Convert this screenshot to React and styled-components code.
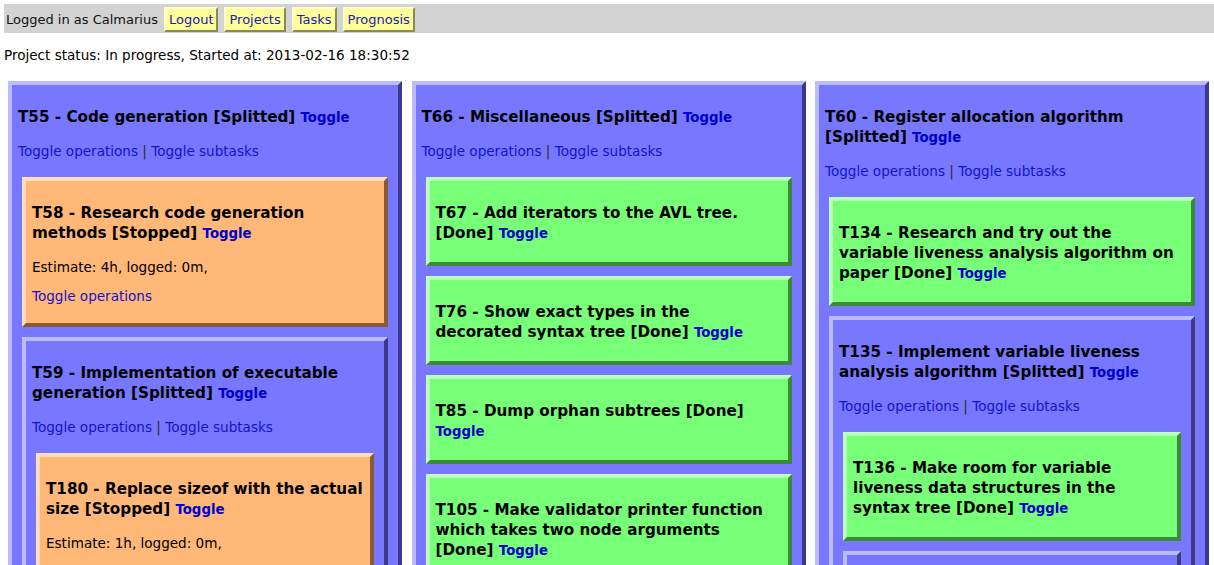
import React from "react";
import styled, { createGlobalStyle, css } from "styled-components";

const GlobalStyle = createGlobalStyle`
  html, body { margin: 0; padding: 0; background: #ffffff; }
  body {
    font-family: "DejaVu Sans", Verdana, sans-serif;
    font-size: 13.55px;
    color: #000;
    overflow: hidden;
  }
`;

const Page = styled.div`
  padding: 4px 0 0 4px;
`;

const TopBar = styled.div`
  background: #d3d3d3;
  height: 29px;
  display: flex;
  align-items: flex-end;
  padding: 0 0 1px 2px;
  box-sizing: border-box;
  gap: 6px;
  color: #111;
  font-size: 13px;
`;

const BarLabel = styled.span`
  line-height: 24px;
`;

const NavButton = styled.a`
  display: inline-block;
  background: #ffff99;
  color: #2020b0;
  font-size: 13px;
  line-height: 17px;
  padding: 2px 3px 2px 3px;
  border-style: solid;
  border-width: 2px;
  border-color: #ffffcc #8a8a55 #8a8a55 #ffffcc;
  text-decoration: none;
  cursor: pointer;
`;

const Status = styled.p`
  margin: 14px 0 0 0;
  line-height: 16px;
`;

const Board = styled.div`
  display: grid;
  grid-template-columns: repeat(3, 394px);
  column-gap: 9.5px;
  margin: 18px 0 0 4px;
  align-items: start;
`;

const palettes = {
  split: { bg: "#7777ff", light: "#bbbbff", dark: "#3a3a8a" },
  stopped: { bg: "#ffb877", light: "#ffdcbb", dark: "#8a5a33" },
  done: { bg: "#77ff77", light: "#bbffbb", dark: "#3a8a3a" },
};

const Box = styled.div`
  background: ${(p) => palettes[p.$kind].bg};
  border-style: solid;
  border-width: 4px;
  border-color: ${(p) =>
    `${palettes[p.$kind].light} ${palettes[p.$kind].dark} ${palettes[p.$kind].dark} ${palettes[p.$kind].light}`};
  padding: 0 6px;
  ${(p) =>
    p.$nested &&
    css`
      margin: 0 4px;
    `}
`;

const Title = styled.h3`
  font-size: 15.2px;
  font-weight: bold;
  line-height: 20px;
  margin: 22px 0 ${(p) => (p.$last ? "19px" : "0")} 0;
  color: #000;
`;

const ToggleLink = styled.a`
  font-size: 13.3px;
  font-weight: bold;
  line-height: 1;
  color: #0000cc;
  text-decoration: none;
  cursor: pointer;
`;

const Line = styled.p`
  margin: ${(p) => (p.$first ? "16px" : "12.5px")} 0 ${(p) => (p.$last ? "19.5px" : "0")} 0;
  line-height: 16px;
`;

const TextLink = styled.a`
  color: #1414c8;
  text-decoration: none;
  cursor: pointer;
`;

const Sep = styled.span`
  color: #2a2a2a;
`;

const Children = styled.div`
  display: flex;
  flex-direction: column;
  gap: 10px;
  margin: 18px 0 10px 0;
`;

const board = [
  {
    id: "T55", name: "Code generation", state: "Splitted",
    children: [
      { id: "T58", name: "Research code generation methods", state: "Stopped", estimate: "Estimate: 4h, logged: 0m," },
      {
        id: "T59", name: "Implementation of executable generation", state: "Splitted",
        children: [
          { id: "T180", name: "Replace sizeof with the actual size", state: "Stopped", estimate: "Estimate: 1h, logged: 0m," },
          { id: "T181", name: "Write the executable file header", state: "Stopped", estimate: "Estimate: 2h, logged: 0m," },
        ],
      },
    ],
  },
  {
    id: "T66", name: "Miscellaneous", state: "Splitted",
    children: [
      { id: "T67", name: "Add iterators to the AVL tree.", state: "Done" },
      { id: "T76", name: "Show exact types in the decorated syntax tree", state: "Done" },
      { id: "T85", name: "Dump orphan subtrees", state: "Done" },
      { id: "T105", name: "Make validator printer function which takes two node arguments", state: "Done" },
      { id: "T106", name: "Print validation errors with node locations", state: "Done" },
    ],
  },
  {
    id: "T60", name: "Register allocation algorithm", state: "Splitted",
    children: [
      { id: "T134", name: "Research and try out the variable liveness analysis algorithm on paper", state: "Done" },
      {
        id: "T135", name: "Implement variable liveness analysis algorithm", state: "Splitted",
        children: [
          { id: "T136", name: "Make room for variable liveness data structures in the syntax tree", state: "Done" },
          {
            id: "T137", name: "Compute liveness information for basic blocks", state: "Splitted",
            children: [
              { id: "T138", name: "Collect used and defined variables", state: "Done" },
            ],
          },
        ],
      },
    ],
  },
];

const kindOf = (state) =>
  state === "Splitted" ? "split" : state === "Stopped" ? "stopped" : "done";

function Task({ task, nested }) {
  const kind = kindOf(task.state);
  const hasChildren = !!task.children;
  const hasEstimate = !!task.estimate;
  const titleOnly = !hasChildren && !hasEstimate;
  return (
    <Box $kind={kind} $nested={nested}>
      <Title $last={titleOnly}>
        {task.id} - {task.name} [{task.state}] <ToggleLink>Toggle</ToggleLink>
      </Title>
      {hasEstimate && <Line $first>{task.estimate}</Line>}
      {hasEstimate && (
        <Line $last>
          <TextLink>Toggle operations</TextLink>
        </Line>
      )}
      {hasChildren && (
        <>
          <Line $first>
            <TextLink>Toggle operations</TextLink> <Sep>|</Sep>{" "}
            <TextLink>Toggle subtasks</TextLink>
          </Line>
          <Children>
            {task.children.map((c) => (
              <Task key={c.id} task={c} nested />
            ))}
          </Children>
        </>
      )}
    </Box>
  );
}

export default function App() {
  return (
    <Page>
      <GlobalStyle />
      <TopBar>
        <BarLabel>Logged in as Calmarius</BarLabel>
        <NavButton>Logout</NavButton>
        <NavButton>Projects</NavButton>
        <NavButton>Tasks</NavButton>
        <NavButton>Prognosis</NavButton>
      </TopBar>
      <Status>Project status: In progress, Started at: 2013-02-16 18:30:52</Status>
      <Board>
        {board.map((t) => (
          <Task key={t.id} task={t} />
        ))}
      </Board>
    </Page>
  );
}
